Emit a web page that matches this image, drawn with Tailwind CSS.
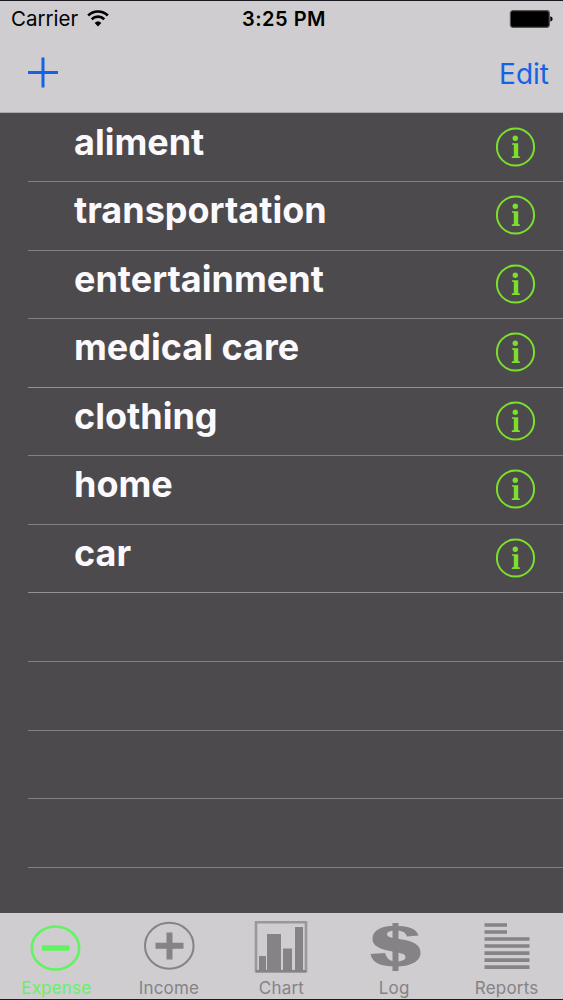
<!DOCTYPE html>
<html lang="en">

<head>
    <meta charset="utf-8">
    <meta name="viewport" content="width=device-width, initial-scale=1">
    <title>Expense</title>
    <script src="https://cdn.jsdelivr.net/npm/@tailwindcss/browser@4"></script>
</head>

<body class="flex h-[1000px] flex-col overflow-hidden border-y border-[#1b1820] bg-[#4c4a4d] font-['Inter',sans-serif]">
    <!-- Shared icons -->
    <svg class="hidden">
        <symbol id="info" viewBox="0 0 40 40">
            <circle cx="19.5" cy="20" r="18.6" fill="none" stroke="currentColor" stroke-width="2" />
            <circle cx="19.3" cy="11.2" r="2.7" fill="currentColor" />
            <path d="M16 16.2h6.200v12.900l1.600.4v1.500h-8v-1.500l2-.4V17.900l-1.800-.4z" fill="currentColor" />
        </symbol>
    </svg>

    <header class="h-28 shrink-0 border-b border-[#aaa8ab] bg-[#cfcdd0]">
        <!-- Status bar -->
        <div class="grid h-9 grid-cols-3 items-center pr-2.5 pl-[11px] text-black">
            <div class="flex items-center gap-[9px]">
                <span class="text-[20.5px]">Carrier</span>
                <svg class="mb-0.5 h-[17px] w-[22px]" viewBox="0 0 22 17" fill="none" stroke="currentColor">
                    <path d="M1.2 5.5a14 14 0 0 1 19.6 0" stroke-width="2.7" />
                    <path d="M4.700 9.200a9 9 0 0 1 12.600 0" stroke-width="2.600" />
                    <path d="M11 16.500l-3.300-3.600a4.800 4.800 0 0 1 6.600 0z" fill="currentColor" stroke="none" />
                </svg>
            </div>
            <span class="pl-1 text-center text-[20px] font-semibold tracking-[0.5px]">3:25 PM</span>
            <svg class="h-[18px] w-11 justify-self-end" viewBox="0 0 44 18">
                <rect x="1.400" y=".7" width="38.900" height="16.600" rx="2.500" fill="#000" stroke="#555357" stroke-width="1.200" />
                <path d="M41.300 6.300q2.400.8 2.400 2.700t-2.400 2.700z" fill="#000" />
            </svg>
        </div>
        <!-- Navigation bar -->
        <div class="flex h-[75px] items-start justify-between pr-[14px] pl-7 text-[#1463e6]">
            <svg class="mt-5 h-[31px] w-[30px]" viewBox="0 0 30 31" stroke="currentColor" stroke-width="3">
                <path d="M15 .5v30M0 15.500h30" />
            </svg>
            <span class="pt-[17px] text-[28px] leading-10">Edit</span>
        </div>
    </header>

    <!-- Categories -->
    <ul class="min-h-0 flex-1 overflow-hidden pt-[0.5px] pl-7 text-[36px] leading-[44px] font-bold text-[#fbf9fc]">
        <li class="flex h-[68.57px] items-start justify-between border-b border-[#838184] pt-1.5 pr-[27px] pl-[46px]">
            <span>aliment</span><svg class="mt-[7px] h-10 w-10 text-[#7be02c]"><use href="#info" /></svg>
        </li>
        <li class="flex h-[68.57px] items-start justify-between border-b border-[#838184] pt-1.5 pr-[27px] pl-[46px]">
            <span>transportation</span><svg class="mt-[7px] h-10 w-10 text-[#7be02c]"><use href="#info" /></svg>
        </li>
        <li class="flex h-[68.57px] items-start justify-between border-b border-[#838184] pt-1.5 pr-[27px] pl-[46px]">
            <span>entertainment</span><svg class="mt-[7px] h-10 w-10 text-[#7be02c]"><use href="#info" /></svg>
        </li>
        <li class="flex h-[68.57px] items-start justify-between border-b border-[#949295] pt-1.5 pr-[27px] pl-[46px]">
            <span>medical care</span><svg class="mt-[7px] h-10 w-10 text-[#7be02c]"><use href="#info" /></svg>
        </li>
        <li class="flex h-[68.57px] items-start justify-between border-b border-[#838184] pt-1.5 pr-[27px] pl-[46px]">
            <span>clothing</span><svg class="mt-[7px] h-10 w-10 text-[#7be02c]"><use href="#info" /></svg>
        </li>
        <li class="flex h-[68.57px] items-start justify-between border-b border-[#838184] pt-1.5 pr-[27px] pl-[46px]">
            <span>home</span><svg class="mt-[7px] h-10 w-10 text-[#7be02c]"><use href="#info" /></svg>
        </li>
        <li class="flex h-[68.57px] items-start justify-between border-b border-[#949295] pt-1.5 pr-[27px] pl-[46px]">
            <span>car</span><svg class="mt-[7px] h-10 w-10 text-[#7be02c]"><use href="#info" /></svg>
        </li>
        <li class="h-[68.57px] border-b border-[#838184]"></li>
        <li class="h-[68.57px] border-b border-[#838184]"></li>
        <li class="h-[68.57px] border-b border-[#838184]"></li>
        <li class="h-[68.57px] border-b border-[#838184]"></li>
    </ul>

    <!-- Tab bar -->
    <nav class="grid h-[86px] shrink-0 grid-cols-5 bg-[#cfcdd0] text-[17px] leading-5 tracking-[0.2px] text-[#858386]">
        <a href="#" class="flex flex-col items-center text-[#62f363]">
            <svg class="mt-2 h-[57px] w-[54px]" viewBox="0 0 54 57">
                <ellipse cx="26.500" cy="27" rx="23.700" ry="21.600" fill="none" stroke="currentColor" stroke-width="2.500" />
                <rect x="13" y="24.200" width="27.500" height="5.600" rx="1" fill="currentColor" />
            </svg>
            <span>Expense</span>
        </a>
        <a href="#" class="flex flex-col items-center">
            <svg class="mt-2 h-[57px] w-[54px]" viewBox="0 0 54 57">
                <ellipse cx="27.300" cy="24.700" rx="24.300" ry="23" fill="none" stroke="currentColor" stroke-width="2" />
                <path d="M27.500 11.500v27M13.500 24.700h28" stroke="currentColor" stroke-width="6" />
            </svg>
            <span>Income</span>
        </a>
        <a href="#" class="flex flex-col items-center">
            <svg class="mt-2 h-[57px] w-[54px]" viewBox="0 0 54 57" fill="currentColor">
                <rect x="2" y="1.200" width="50" height="49" fill="none" stroke="#9a989b" stroke-width="2.600" />
                <path d="M5 35h7v15H5zM13 13h14v37H13zM29 27.500h9V50h-9zM41 6h8v44h-8z" />
                <path d="M2 49h50v2.400H2z" />
            </svg>
            <span>Chart</span>
        </a>
        <a href="#" class="flex flex-col items-center">
            <svg class="mt-2 h-[57px] w-[54px]" viewBox="0 0 54 57" fill="currentColor">
                <path d="M25.500 2h6v48h-6z" />
                <path d="M51.500 14.500L40 15.500C38.500 11 34.500 9.500 28.500 9.500c-5 0-8.500 1.300-8.500 3.800 0 2.700 4.500 3.700 12 4.700C46 20 53.500 23.500 53.500 31.500 53.500 41 43 45.500 28.500 45.500 14.500 45.500 5 42 3.500 33l14.500-1C19.500 37 23 40.500 29 40.500c6 0 9.500-1.700 9.500-4.500 0-3-4.500-4-12-5.200C12.500 28.500 5.500 25 5.500 17.500 5.500 9 15 4.800 28 4.800 40.500 4.800 49.500 7.500 51.500 14.500z" />
            </svg>
            <span>Log</span>
        </a>
        <a href="#" class="flex flex-col items-center">
            <svg class="mt-2 h-[57px] w-[54px]" viewBox="0 0 54 57" stroke="currentColor" stroke-width="3.700">
                <path d="M4.500 4h22.500M4.500 11h22.500M4.500 18h45M4.500 25h45M4.500 32.200h45M4.500 39.200h45M4.500 46.200h45" />
            </svg>
            <span>Reports</span>
        </a>
    </nav>
</body>

</html>
